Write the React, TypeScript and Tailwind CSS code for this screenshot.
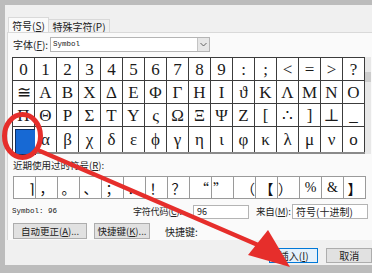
import React from "react";

const cjk = { fontFamily: '"Noto Sans CJK SC", "Liberation Sans", sans-serif' };
const serif = { fontFamily: '"Liberation Serif", "DejaVu Serif", serif' };
const mono = { fontFamily: '"Liberation Mono", "DejaVu Sans Mono", monospace' };

const rows = [
  ["0", "1", "2", "3", "4", "5", "6", "7", "8", "9", ":", ";", "<", "=", ">", "?"],
  ["≅", "Α", "Β", "Χ", "Δ", "Ε", "Φ", "Γ", "Η", "Ι", "ϑ", "Κ", "Λ", "Μ", "Ν", "Ο"],
  ["Π", "Θ", "Ρ", "Σ", "Τ", "Υ", "ς", "Ω", "Ξ", "Ψ", "Ζ", "[", "∴", "]", "⊥", "_"],
  ["", "α", "β", "χ", "δ", "ε", "ϕ", "γ", "η", "ι", "φ", "κ", "λ", "μ", "ν", "ο"],
];

// 近期使用过的符号
const recent = [
  { c: "⌉", a: "justify-end pr-[1px]" },
  { c: "，", a: "justify-center" },
  { c: "。", a: "justify-center" },
  { c: "、", a: "justify-center" },
  { c: "；", a: "justify-center" },
  { c: "．", a: "justify-center" },
  { c: "！", a: "justify-center" },
  { c: "？", a: "justify-center" },
  { c: "“", a: "justify-end pr-[2px]" },
  { c: "”", a: "justify-start pl-[1px]" },
  { c: "（", a: "justify-end" },
  { c: "【", a: "justify-center" },
  { c: "）", a: "justify-start" },
  { c: "%", a: "justify-center" },
  { c: "&", a: "justify-center" },
  { c: "】", a: "justify-center" },
];

function Btn({ children, className = "" }: { children: React.ReactNode; className?: string }) {
  return (
    <div
      className={`h-[16px] flex items-center justify-center whitespace-nowrap bg-[#e1e1e1] border border-[#adadad] text-[9.5px] text-[#222] ${className}`}
      style={cjk}
    >
      {children}
    </div>
  );
}

export default function App() {
  return (
    <div className="relative w-[372px] h-[273px] overflow-hidden bg-[#bcbcbc] pl-[5px] pt-[5px]">
      <div className="w-[367px] h-[260px] bg-[#f0f0f0] flex flex-col">
        {/* tabs */}
        <div className="mt-[12px] pl-[3px] h-[15px] flex items-end text-[10px] text-[#222] whitespace-nowrap" style={cjk}>
          <div className="w-[41px] h-[16px] -mb-[1px] bg-[#fafafa] border border-b-0 border-[#d9d9d9] flex items-center justify-center">
            符号(<u>S</u>)
          </div>
          <div className="w-[61px] h-[13px] bg-[#f0f0f0] border border-l-0 border-b-0 border-[#d9d9d9] flex items-center justify-center">
            特殊字符(<u>P</u>)
          </div>
        </div>

        {/* panel */}
        <div className="ml-[2px] h-[208px] bg-[#fafafa] border-t border-l border-[#d9d9d9] flex flex-col">
          <div className="mt-[4px] pl-[5px] h-[15px] flex items-center">
            <span className="w-[37px] text-[10px] text-[#222] whitespace-nowrap" style={cjk}>
              字体(<u>F</u>):
            </span>
            <div className="w-[160px] h-[15px] bg-white border border-[#b4b4b4] flex items-center justify-between">
              <span className="pl-[2px] text-[7.5px] text-[#222]" style={mono}>
                Symbol
              </span>
              <div className="w-[12px] h-[13px] bg-[#e6e6e6] border-l border-[#c4c4c4] flex items-center justify-center">
                <svg width="7" height="5" viewBox="0 0 7 5">
                  <path d="M0.5 1 L3.5 4 L6.5 1" fill="none" stroke="#555" strokeWidth="0.9" />
                </svg>
              </div>
            </div>
          </div>

          {/* character grid */}
          <div className="mt-[5px] ml-[4px] flex">
            <div className="border-t border-l border-[#3c3c3c]">
              {rows.map((row, ri) => (
                <div key={ri} className={`flex ${ri === 3 ? "h-[27px] border-b-2 border-[#8a8a8a]" : "h-[23px]"}`}>
                  {row.map((ch, ci) => (
                    <div
                      key={ci}
                      className={`relative w-[22px] bg-white border-r border-[#3c3c3c] flex items-center justify-center text-[17px] text-[#1a1a1a] leading-none ${
                        ri === 3 ? "" : "border-b"
                      }`}
                      style={serif}
                    >
                      {ri === 3 && ci === 0 ? (
                        <div className="absolute left-[2px] top-[2px] w-[21px] h-[26px] bg-[#1769d4] border border-[#0b2f66]" />
                      ) : (
                        ch
                      )}
                    </div>
                  ))}
                </div>
              ))}
            </div>
            <div className="w-[6px] bg-[#e8e8e8] flex flex-col">
              <div className="mt-[15px] h-[10px] bg-[#cdcdcd]" />
            </div>
          </div>

          <div className="mt-[5px] pl-[5px] h-[12px] flex items-center text-[9.5px] text-[#222] whitespace-nowrap" style={cjk}>
            近期使用过的符号(<u>R</u>):
          </div>

          <div className="mt-[5px] ml-[5px] flex h-[23px] border-t border-b border-l border-[#9a9a9a] w-fit">
            {recent.map((r, i) => (
              <div
                key={i}
                className={`w-[22px] bg-white border-r border-[#9a9a9a] flex items-center text-[14px] text-[#111] leading-none ${r.a}`}
                style={i >= 13 && i <= 14 ? serif : cjk}
              >
                {r.c}
              </div>
            ))}
          </div>

          {/* info row */}
          <div className="mt-[5px] h-[15px] flex items-center text-[9.5px] text-[#222] whitespace-nowrap" style={cjk}>
            <span className="pl-[4px] w-[125px] text-[7.5px]" style={mono}>
              Symbol: 96
            </span>
            <span className="w-[60px] text-[9px] tracking-[-0.2px]">
              字符代码(<u>C</u>):
            </span>
            <div className="w-[56px] h-[14px] bg-white border border-[#b4b4b4] flex items-center pl-[3px] text-[9px]">96</div>
            <span className="ml-[7px] w-[36px] tracking-[-0.2px]">
              来自(<u>M</u>):
            </span>
            <div className="w-[76px] h-[15px] bg-white border border-[#b4b4b4] flex items-center pl-[3px] text-[10px]">
              符号(十进制)
            </div>
          </div>

          {/* shortcut row */}
          <div className="mt-[4px] pl-[5px] flex items-center gap-[7px]">
            <Btn className="w-[74px]">自动更正(<u>A</u>)...</Btn>
            <Btn className="w-[56px]">快捷键(<u>K</u>)...</Btn>
            <span className="ml-[8px] text-[10px] text-[#222] whitespace-nowrap" style={cjk}>
              快捷键:
            </span>
          </div>
        </div>

        {/* bottom buttons */}
        <div className="mt-[8px] pl-[264px] flex gap-[8px]">
          <div
            className="w-[54px] h-[15px] bg-[#e5f1fb] border border-[#0078d7] flex items-center justify-center text-[10px] text-[#222] whitespace-nowrap"
            style={cjk}
          >
            插入(<u>I</u>)
          </div>
          <div
            className="w-[50px] h-[15px] bg-[#e1e1e1] border border-[#adadad] flex items-center justify-center text-[10px] text-[#222]"
            style={cjk}
          >
            取消
          </div>
        </div>
      </div>

      {/* red annotation */}
      <svg className="absolute inset-0 pointer-events-none" width="372" height="273" viewBox="0 0 372 273">
        <ellipse cx="22.5" cy="136" rx="18" ry="21.5" fill="none" stroke="#e62e2b" strokeWidth="5" />
        <line x1="40" y1="151" x2="258" y2="245" stroke="#e62e2b" strokeWidth="4.5" strokeLinecap="round" />
        <polygon points="290,267 248,255 268,230" fill="#e62e2b" />
      </svg>
    </div>
  );
}
